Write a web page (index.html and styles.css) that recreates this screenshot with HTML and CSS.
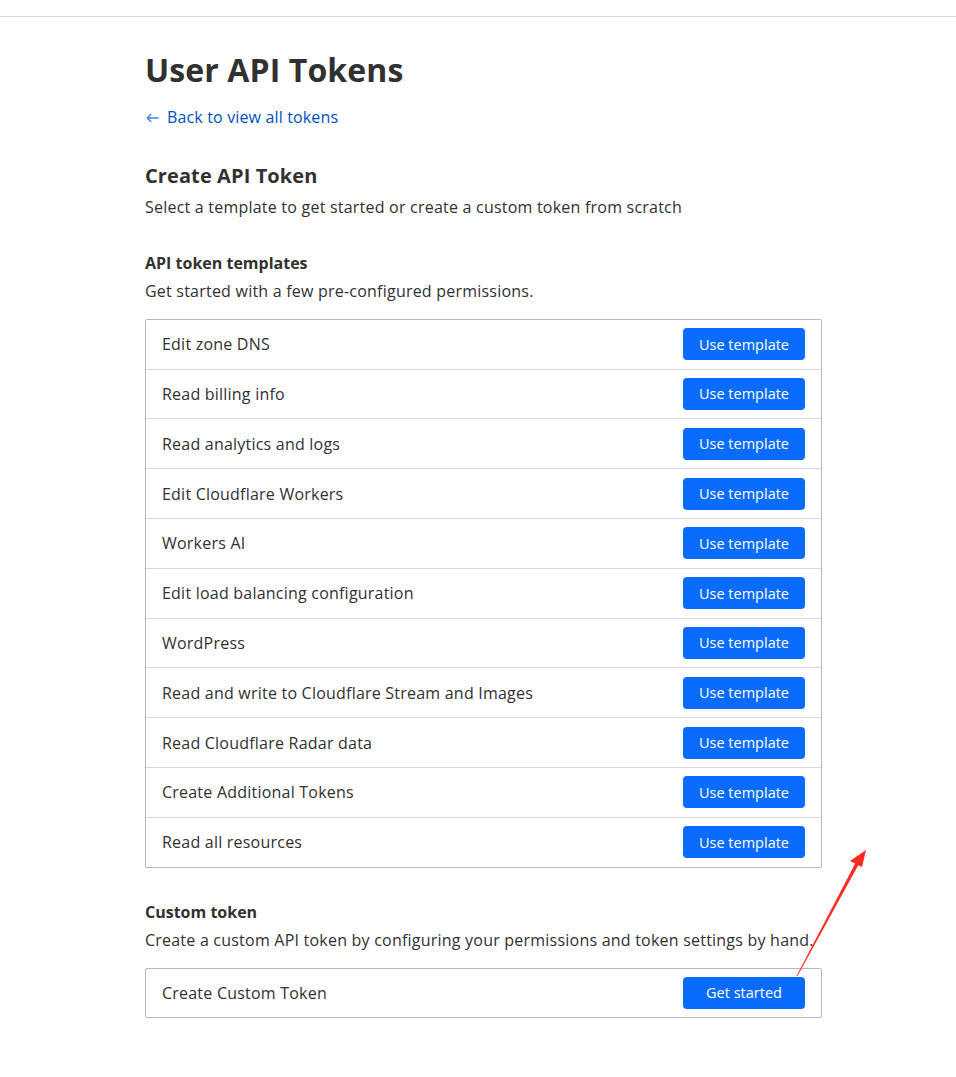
FILE: index.html
```html
<!DOCTYPE html>
<html lang="en">
<head>
<meta charset="utf-8">
<title>User API Tokens</title>
<link rel="stylesheet" href="styles.css">
</head>
<body>
<div class="topbar"></div>
<main class="page">
  <h1 class="title">User API Tokens</h1>
  <a class="back" href="#"><svg class="arrow" width="13" height="10" viewBox="0 0 13 10"><path d="M12.5 5H1.2M5.2 1L1.2 5l4 4" fill="none" stroke="#3a84e6" stroke-width="1.3"/></svg>Back to view all tokens</a>

  <h2 class="section-title">Create API Token</h2>
  <p class="section-desc">Select a template to get started or create a custom token from scratch</p>

  <h3 class="group-title">API token templates</h3>
  <p class="group-desc">Get started with a few pre-configured permissions.</p>

  <div class="list">
    <div class="row"><span class="row-label">Edit zone DNS</span><button class="btn">Use template</button></div>
    <div class="row"><span class="row-label">Read billing info</span><button class="btn">Use template</button></div>
    <div class="row"><span class="row-label">Read analytics and logs</span><button class="btn">Use template</button></div>
    <div class="row"><span class="row-label">Edit Cloudflare Workers</span><button class="btn">Use template</button></div>
    <div class="row"><span class="row-label">Workers AI</span><button class="btn">Use template</button></div>
    <div class="row"><span class="row-label">Edit load balancing configuration</span><button class="btn">Use template</button></div>
    <div class="row"><span class="row-label">WordPress</span><button class="btn">Use template</button></div>
    <div class="row"><span class="row-label">Read and write to Cloudflare Stream and Images</span><button class="btn">Use template</button></div>
    <div class="row"><span class="row-label">Read Cloudflare Radar data</span><button class="btn">Use template</button></div>
    <div class="row"><span class="row-label">Create Additional Tokens</span><button class="btn">Use template</button></div>
    <div class="row"><span class="row-label">Read all resources</span><button class="btn">Use template</button></div>
  </div>

  <h3 class="group-title custom">Custom token</h3>
  <p class="group-desc">Create a custom API token by configuring your permissions and token settings by hand.</p>

  <div class="list">
    <div class="row"><span class="row-label">Create Custom Token</span><button class="btn">Get started</button></div>
  </div>
</main>
<svg class="annotation" width="956" height="1077" viewBox="0 0 956 1077">
  <polygon points="796.5,976 857,860 860,862 797.5,976" fill="#ff2a1f"/>
  <polygon points="866,850 850,861 862,867" fill="#ff2a1f"/>
</svg>
</body>
</html>
```

FILE: styles.css
```css
html, body {
  margin: 0;
  padding: 0;
  background: #ffffff;
}
body {
  font-family: "Open Sans", "Noto Sans", sans-serif;
  color: #313131;
  position: relative;
  min-height: 1077px;
}
.topbar {
  height: 16px;
  border-bottom: 1px solid #d9d9d9;
}
.page {
  margin-left: 145px;
  width: 677px;
  padding-top: 31px;
}
.title {
  margin: 0;
  font-size: 32px;
  line-height: 44px;
  font-weight: 700;
  letter-spacing: 0.1px;
  color: #313131;
}
.back {
  display: inline-flex;
  align-items: center;
  gap: 8px;
  margin-top: 13px;
  font-size: 16px;
  line-height: 24px;
  letter-spacing: 0.15px;
  color: #0051c3;
  text-decoration: none;
}
.arrow {
  margin-left: 1px;
  margin-top: 2px;
}
.section-title {
  margin: 32px 0 0;
  font-size: 20px;
  line-height: 30px;
  font-weight: 700;
  letter-spacing: 0.1px;
}
.section-desc {
  margin: 4px 0 0;
  font-size: 16px;
  line-height: 24px;
  letter-spacing: 0.22px;
}
.group-title {
  margin: 32px 0 0;
  font-size: 16px;
  line-height: 24px;
  font-weight: 700;
}
.group-title.custom {
  margin-top: 32px;
}
.group-desc {
  margin: 4px 0 0;
  font-size: 16px;
  line-height: 24px;
  letter-spacing: 0.22px;
}
.list {
  margin-top: 16px;
  border: 1px solid #b8b8b8;
  border-radius: 2px;
}
.row {
  display: flex;
  align-items: center;
  justify-content: space-between;
  height: 48.8px;
  padding: 0 16px;
  border-top: 1px solid #d9d9d9;
}
.row:first-child {
  border-top: none;
  height: 48.6px;
}
.row-label {
  font-size: 16px;
  letter-spacing: 0.22px;
}
.btn {
  width: 122px;
  height: 32px;
  border: none;
  border-radius: 4px;
  background: #0a6cff;
  color: #ffffff;
  font-family: inherit;
  font-size: 14.5px;
  padding: 0;
  cursor: pointer;
}
.annotation {
  position: absolute;
  left: 0;
  top: 0;
  pointer-events: none;
}
```
